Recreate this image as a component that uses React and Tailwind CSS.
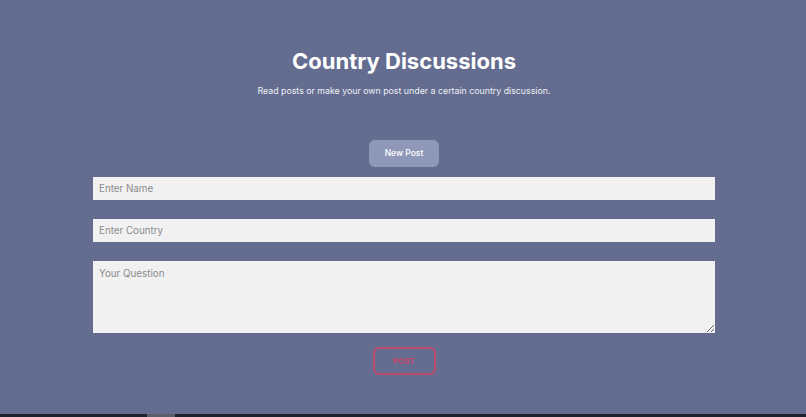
export default function App() {
  return (
    <div className="flex h-[417px] flex-col bg-[#1f2230] font-['Inter','Noto_Sans',sans-serif]">
      <div className="flex h-[414px] flex-col items-center bg-[#646d90] pl-[2px]">
        <h1 className="mt-[47px] text-[22px] font-bold leading-[28px] text-white">Country Discussions</h1>
        <p className="mt-[10px] text-[8.8px] leading-[12px] text-[#eef0f6]">
          Read posts or make your own post under a certain country discussion.
        </p>
        <button className="mt-[43px] h-[27px] w-[70px] rounded-[6px] bg-[#8f98b9] text-[8.5px] font-medium text-white">
          New Post
        </button>
        <form className="mt-[10px] flex w-[622px] flex-col">
          <input
            className="h-[23px] w-full bg-[#f1f1f1] px-[6px] text-[9.8px] text-gray-700 outline-none placeholder:text-[#8a8a8a]"
            placeholder="Enter Name"
          />
          <input
            className="mt-[19px] h-[23px] w-full bg-[#f1f1f1] px-[6px] text-[9.8px] text-gray-700 outline-none placeholder:text-[#8a8a8a]"
            placeholder="Enter Country"
          />
          <textarea
            className="mt-[19px] h-[72px] w-full bg-[#f1f1f1] px-[6px] py-[6px] text-[9.8px] text-gray-700 outline-none placeholder:text-[#8a8a8a]"
            placeholder="Your Question"
          />
          <div className="mt-[14px] flex justify-center">
            <button
              type="button"
              className="h-[28px] w-[63px] rounded-[6px] border-2 border-[#c04a6c] text-[8px] font-bold text-[#c8466c]"
            >
              POST
            </button>
          </div>
        </form>
      </div>
      <div className="flex h-[3px]">
        <div className="ml-[147px] w-[28px] bg-[#5b5e6b]" />
      </div>
    </div>
  )
}
